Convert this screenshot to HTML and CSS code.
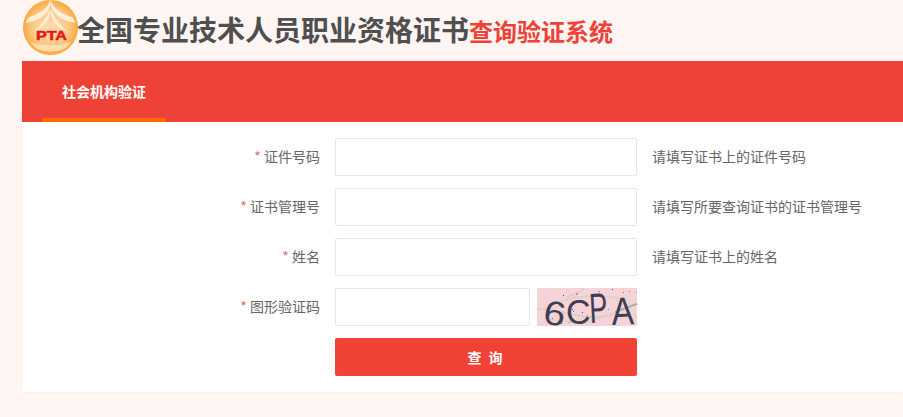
FILE: index.html
```html
<!DOCTYPE html>
<html lang="zh-CN">
<head>
    <meta charset="UTF-8">
    <meta name="viewport" content="width=device-width, initial-scale=1.0">
    <title>全国专业技术人员职业资格证书查询验证系统</title>
    <link rel="stylesheet" href="styles.css">
</head>
<body>
    <div class="header">
        <svg class="logo" width="56" height="61" viewBox="0 0 56 61">
            <defs>
                <radialGradient id="logoFill" cx="50%" cy="50%" r="50%">
                    <stop offset="0%" stop-color="#fde0b4"/>
                    <stop offset="70%" stop-color="#fbc67c"/>
                    <stop offset="100%" stop-color="#f8a93f"/>
                </radialGradient>
            </defs>
            <circle cx="28.500" cy="28.500" r="27.500" fill="url(#logoFill)"/>
            <!-- roof lines, left and right -->
            <path d="M28 0C27 9 18 15 7 18C5 20 4 22 4 24C16 22 26 16 28.500 6Z" fill="#fff" opacity="0.7"/>
            <path d="M29 0C30 9 39 15 50 18C52 20 53 22 53 24C41 22 31 16 28.500 6Z" fill="#fff" opacity="0.7"/>
            <path d="M27.500 10C25 20 17 27 11 33C20 30 27 23 28.500 14Z" fill="#fff" opacity="0.6"/>
            <path d="M29.500 10C32 20 40 27 46 33C37 30 30 23 28.500 14Z" fill="#fff" opacity="0.6"/>
            <path d="M28.500 14V31" stroke="#f9c9a8" stroke-width="1"/>
            <path d="M8 43Q28.500 50 49 43Q46 48 42 50Q28.500 55 15 50Q11 47 8 43Z" fill="#fff3dc" opacity="0.6"/>
            <text class="logo-text" x="14" y="41" textLength="31" lengthAdjust="spacingAndGlyphs">PTA</text>
        </svg>
        <h1 class="title">全国专业技术人员职业资格证书<span class="title-sub">查询验证系统</span></h1>
    </div>

    <div class="panel">
        <div class="tabs">
            <a class="tab active">社会机构验证</a>
        </div>

        <form class="form">
            <div class="form-row">
                <label class="form-label"><span class="req">*</span> 证件号码</label>
                <input class="form-input" type="text">
                <span class="form-hint">请填写证书上的证件号码</span>
            </div>
            <div class="form-row">
                <label class="form-label"><span class="req">*</span> 证书管理号</label>
                <input class="form-input" type="text">
                <span class="form-hint">请填写所要查询证书的证书管理号</span>
            </div>
            <div class="form-row">
                <label class="form-label"><span class="req">*</span> 姓名</label>
                <input class="form-input" type="text">
                <span class="form-hint">请填写证书上的姓名</span>
            </div>
            <div class="form-row">
                <label class="form-label"><span class="req">*</span> 图形验证码</label>
                <div class="captcha-box">
                    <input class="form-input captcha-input" type="text">
                    <svg class="captcha" width="100" height="38" viewBox="0 0 100 38">
                        <rect width="100" height="38" fill="#f6d3d7"/>
                        <path d="M1 21C25 22 40 30 60 29S85 20 100 15" fill="none" stroke="#cfcfbc" stroke-width="2" stroke-dasharray="3 1"/>
                        <path d="M30 9C36 7 44 3 48 0M20 14C45 7 62 6 92 12" fill="none" stroke="#d0d0be" stroke-width="1.500" stroke-dasharray="3 1"/>
                        <path d="M4 29C30 37 55 36 68 27" fill="none" stroke="#d0d0be" stroke-width="1.500" stroke-dasharray="2 1"/>
                        <path d="M78 24L100 16" stroke="#a5a69b" stroke-width="1.500"/>
                        <g fill="#d0419c">
                            <rect x="40" y="5" width="1" height="1"/><rect x="62" y="3" width="1" height="1"/>
                            <rect x="22" y="17" width="1" height="1"/><rect x="36" y="23" width="1" height="1"/>
                            <rect x="92" y="3" width="1" height="1"/><rect x="15" y="30" width="1" height="1"/>
                            <rect x="86" y="4" width="1" height="1"/><rect x="57" y="8" width="1" height="1"/>
                        </g>
                        <g fill="#1fb7d8">
                            <rect x="32" y="34" width="1" height="1"/><rect x="71" y="21" width="1" height="1"/>
                            <rect x="50" y="27" width="1" height="1"/><rect x="99" y="4" width="1" height="1"/>
                            <rect x="48" y="31" width="1" height="1"/>
                        </g>
                        <g fill="#2b8a3e">
                            <rect x="47" y="14" width="1" height="1"/><rect x="82" y="15" width="1" height="1"/>
                            <rect x="24" y="35" width="1" height="1"/><rect x="57" y="33" width="1" height="1"/>
                            <rect x="39" y="6" width="1" height="1"/>
                        </g>
                        <g fill="#3a3fb0">
                            <rect x="75" y="1" width="1" height="1"/><rect x="26" y="7" width="1" height="1"/>
                            <rect x="45" y="24" width="1" height="1"/><rect x="55" y="19" width="1" height="1"/>
                            <rect x="35" y="21" width="1" height="1"/>
                        </g>
                        <g class="captcha-text">
                            <text transform="translate(5 35) rotate(10) scale(1.150 1)" font-size="34">6</text>
                            <text transform="translate(29 36) scale(1 1.050)" font-size="34">C</text>
                            <text transform="translate(53 35) rotate(-3) scale(0.650 1)" font-size="42">P</text>
                            <text transform="translate(75 37) rotate(-2) scale(0.860 1)" font-size="39">A</text>
                        </g>
                    </svg>
                </div>
            </div>
            <div class="form-row">
                <span class="form-label"></span>
                <button class="btn-submit" type="button">查 询</button>
            </div>
        </form>
    </div>
</body>
</html>
```

FILE: styles.css
```css
* {
    box-sizing: border-box;
}

html, body {
    overflow: hidden;
}

body {
    margin: 0;
    min-height: 417px;
    background: #fff5f2;
    font-family: "Noto Sans CJK SC", "Liberation Sans", sans-serif;
    color: #606266;
}

.header {
    height: 61px;
    padding-left: 22px;
    display: flex;
    align-items: center;
}

.logo {
    flex: none;
    margin-top: -2px;
}

.logo-text {
    font-family: "Liberation Sans", sans-serif;
    font-size: 13px;
    font-weight: bold;
    fill: #e8141c;
    stroke: #e8141c;
    stroke-width: 0.500px;
}

.title {
    margin: -1px 0 0 -1px;
    font-size: 28px;
    line-height: 61px;
    font-weight: bold;
    color: #4f4f4f;
    white-space: nowrap;
}

.title-sub {
    font-size: 24px;
    color: #ee4236;
}

.panel {
    margin-left: 22px;
    height: 331px;
    background: #fff;
    border-radius: 2px 0 0 2px;
    box-shadow: 0 1px 2px rgba(0, 0, 0, 0.03);
}

.tabs {
    height: 61px;
    padding-left: 20px;
    background: #ee4236;
    display: flex;
}

.tab {
    width: 124px;
    height: 61px;
    border-bottom: 4px solid #ff6a00;
    text-align: center;
    font-size: 14px;
    font-weight: bold;
    line-height: 61px;
    color: #fff;
}

.form {
    padding-top: 16px;
    display: flex;
    flex-direction: column;
    gap: 12px;
}

.form-row {
    height: 38px;
    display: flex;
    align-items: center;
}

.form-label {
    flex: none;
    width: 298px;
    margin-top: -2px;
    text-align: right;
    font-size: 14px;
    color: #666;
}

.req {
    color: #d9735f;
}

.form-input {
    flex: none;
    width: 302px;
    height: 38px;
    margin: 0 0 0 15px;
    border: 1px solid #e6e6e6;
    border-radius: 2px;
    background: #fff;
    outline: none;
}

.form-hint {
    margin: -2px 0 0 15px;
    font-size: 14px;
    color: #666;
    white-space: nowrap;
}

.captcha-box {
    display: flex;
    align-items: center;
    gap: 7px;
}

.captcha-input {
    width: 195px;
}

.captcha {
    display: block;
    overflow: visible;
}

.captcha-text {
    font-family: "Liberation Sans", sans-serif;
    fill: #3d3f55;
}

.btn-submit {
    width: 302px;
    height: 38px;
    margin-left: 15px;
    border: none;
    border-radius: 2px;
    background: #f04336;
    color: #fff;
    font-family: inherit;
    font-size: 14px;
    font-weight: bold;
    letter-spacing: 2px;
}
```
